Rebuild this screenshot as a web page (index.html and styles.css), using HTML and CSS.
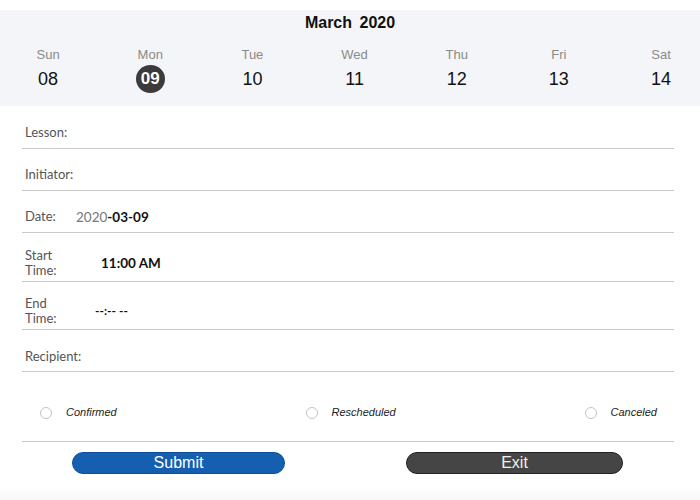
FILE: index.html
```html
<!DOCTYPE html>
<html>
<head>
<meta charset="utf-8">
<link rel="stylesheet" href="styles.css">
</head>
<body>
<div class="header">
  <div class="title">March 2020</div>
  <div class="days">
    <div class="day"><div class="dname">Sun</div><div class="dnum">08</div></div>
    <div class="day"><div class="dname">Mon</div><div class="dnum sel">09</div></div>
    <div class="day"><div class="dname">Tue</div><div class="dnum">10</div></div>
    <div class="day"><div class="dname">Wed</div><div class="dnum">11</div></div>
    <div class="day"><div class="dname">Thu</div><div class="dnum">12</div></div>
    <div class="day"><div class="dname">Fri</div><div class="dnum">13</div></div>
    <div class="day"><div class="dname">Sat</div><div class="dnum">14</div></div>
  </div>
</div>
<div class="form">
  <div class="row r1 first"><span class="label">Lesson:</span></div>
  <div class="row r1"><span class="label">Initiator:</span></div>
  <div class="row r1"><span class="label lw-date">Date:</span><span class="val"><span class="dim">2020</span>-03-09</span></div>
  <div class="row r2 start"><span class="label lw-start">Start<br>Time:</span><span class="val">11:00 AM</span></div>
  <div class="row r2 end"><span class="label lw-end">End<br>Time:</span><span class="val small">--:-- --</span></div>
  <div class="row r1 rec"><span class="label">Recipient:</span></div>
  <div class="status">
    <label class="opt"><span class="radio"></span><span class="otext">Confirmed</span></label>
    <label class="opt"><span class="radio"></span><span class="otext">Rescheduled</span></label>
    <label class="opt"><span class="radio"></span><span class="otext">Canceled</span></label>
  </div>
  <div class="actions">
    <button class="btn submit">Submit</button>
    <button class="btn exit">Exit</button>
  </div>
</div>
<div class="foot"></div>
</body>
</html>
```
FILE: styles.css
```css
html, body { margin: 0; padding: 0; background: #fff; }
body { width: 700px; height: 500px; overflow: hidden; font-family: "Liberation Sans", Arial, sans-serif; }

.header {
  margin-top: 10px;
  height: 96px;
  box-sizing: border-box;
  padding-top: 4px;
  background: #f4f5f8;
  overflow: hidden;
}
.title {
  text-align: center;
  font-weight: bold;
  font-size: 16px;
  line-height: 18px;
  word-spacing: 3px;
  color: #111;
}
.days {
  display: grid;
  grid-template-columns: repeat(7, 102.17px);
  margin-left: -3px;
  margin-top: 15px;
}
.day { display: flex; flex-direction: column; align-items: center; }
.dname { font-size: 13px; line-height: 16px; color: #8a8a8a; }
.dnum {
  margin-top: 2px;
  height: 28px;
  line-height: 28px;
  font-size: 18px;
  color: #111;
}
.dnum.sel {
  width: 29px;
  border-radius: 50%;
  background: #3b3b3b;
  color: #fff;
  font-weight: bold;
  text-align: center;
  font-size: 17px;
}

.form { margin: 0 26px 0 22px; font-family: Lato, "Liberation Sans", sans-serif; }
.row {
  display: flex;
  align-items: center;
  box-sizing: border-box;
  border-bottom: 1.5px solid #c9c9c9;
  padding-left: 3px;
}
.r1 { height: 42px; padding-top: 10px; }
.r1.first { height: 43px; padding-top: 11px; }
.rec { padding-top: 12px; }
.r2 { height: 49px; padding-top: 11px; }
.end { height: 48px; padding-top: 10px; }
.label { font-size: 13px; line-height: 15px; color: #555; }
.lw-date { width: 51px; }
.lw-start { width: 76px; }
.lw-end { width: 70px; }
.val { font-size: 13.5px; font-weight: bold; color: #111; }
.val.small { font-size: 12px; }
.dim { font-weight: normal; color: #777; }

.status {
  height: 70px;
  box-sizing: border-box;
  padding: 34px 17px 0 18px;
  display: flex;
  justify-content: space-between;
  align-items: flex-start;
  border-bottom: 1.5px solid #c9c9c9;
}
.opt { display: flex; align-items: center; gap: 14px; }
.radio {
  width: 10px; height: 10px;
  border: 1px solid #c4c4c4;
  border-radius: 50%;
  background: #fff;
}
.otext {
  font-family: "Liberation Sans", Arial, sans-serif;
  font-style: italic;
  font-size: 11px;
  line-height: 13px;
  color: #222;
}

.actions {
  display: flex;
  padding: 10px 0 0 50px;
  gap: 121px;
}
.btn {
  height: 22px;
  border-radius: 11px;
  font-family: "Liberation Sans", Arial, sans-serif;
  font-size: 16px;
  line-height: 20px;
  padding: 0;
  cursor: pointer;
}
.submit { width: 213px; background: #155fb1; border: 1px solid #0f4f99; color: #fff; }
.exit { width: 217px; background: #454545; border: 1px solid #222; color: #f0f0f0; }

.foot {
  position: fixed;
  left: 0; right: 0; bottom: 0;
  height: 11px;
  background: linear-gradient(#fdfdfd, #f8f8f8);
}
```
